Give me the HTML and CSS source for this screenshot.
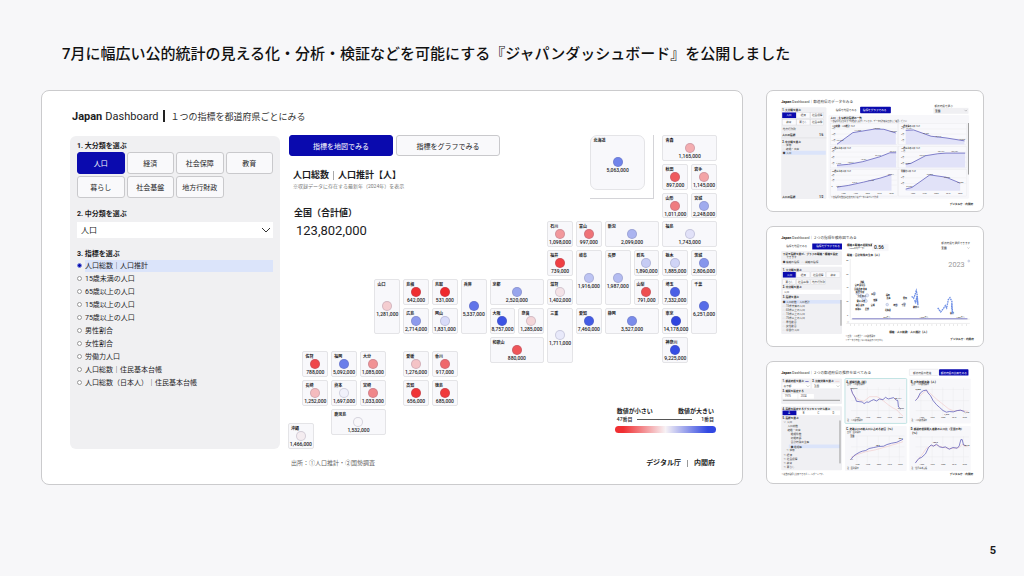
FILE: index.html
```html
<!DOCTYPE html>
<html lang="ja">
<head>
<meta charset="utf-8">
<title>ジャパンダッシュボード</title>
<link rel="stylesheet" href="styles.css">
</head>
<body>
<h1 class="title">7月に幅広い公的統計の見える化・分析・検証などを可能にする『ジャパンダッシュボード』を公開しました</h1>
<main class="slide">
  <section class="panel">
    <h2 class="brand"><b>Japan</b> <span>Dashboard</span><i class="brand-bar"></i><small>１つの指標を都道府県ごとにみる</small></h2>
    <div class="columns">
      <form class="sidebar">
        <h3>1. 大分類を選ぶ</h3>
        <div class="chips">
          <button type="button" class="on">人口</button><button type="button">経済</button><button type="button">社会保障</button><button type="button">教育</button>
          <button type="button">暮らし</button><button type="button">社会基盤</button><button type="button">地方行財政</button>
        </div>
        <h3><label for="mid">2. 中分類を選ぶ</label></h3>
        <div class="select-box">
          <select id="mid"><option>人口</option></select>
          <svg class="chevron" viewBox="0 0 10 6"><path d="M1 1l4 4 4-4"/></svg>
        </div>
        <h3>3. 指標を選ぶ</h3>
        <div class="options">
          <label><input type="radio" name="k" checked><span>人口総数｜人口推計</span></label>
          <label><input type="radio" name="k"><span>15歳未満の人口</span></label>
          <label><input type="radio" name="k"><span>65歳以上の人口</span></label>
          <label><input type="radio" name="k"><span>15歳以上の人口</span></label>
          <label><input type="radio" name="k"><span>75歳以上の人口</span></label>
          <label><input type="radio" name="k"><span>男性割合</span></label>
          <label><input type="radio" name="k"><span>女性割合</span></label>
          <label><input type="radio" name="k"><span>労働力人口</span></label>
          <label><input type="radio" name="k"><span>人口総数｜住民基本台帳</span></label>
          <label><input type="radio" name="k"><span>人口総数（日本人）｜住民基本台帳</span></label>
        </div>
      </form>
      <div class="map" id="map">
        <div class="intro">
          <div class="tabs"><button type="button" class="on">指標を地図でみる</button><button type="button">指標をグラフでみる</button></div>
          <h3>人口総数<i></i>人口推計【人】</h3>
          <p class="note">※収録データに存在する最新年（2024年）を表示</p>
          <p class="total-label">全国（合計値）</p>
          <p class="total">123,802,000</p>
        </div>
        <div class="inset"></div>
        <div class="legend">
          <p class="ends"><b>数値が小さい</b><b>数値が大きい</b></p>
          <p class="ranks"><span>47番目</span><i></i><span>1番目</span></p>
          <div class="ramp"></div>
        </div>
      </div>
    </div>
    <footer class="foot"><span>出所：①人口推計・②国勢調査</span><b>デジタル庁<i></i>内閣府</b></footer>
  </section>

  <aside class="thumbs">
    <svg class="thumb" viewBox="18 15 654 362">
      <text class="t-brand" x="61" y="50"><tspan class="b">Japan</tspan> Dashboard｜都道府県のデータをみる</text>
      <rect class="side" x="61" y="64" width="137" height="278" rx="4"/>
      <text class="b" x="64" y="76">1. 大分類を選ぶ</text>
      <g class="chip"><rect class="navy" x="64" y="80" width="42" height="17"/><rect x="108" y="80" width="40" height="17"/><rect x="150" y="80" width="39" height="17"/><rect x="64" y="101" width="42" height="17"/><rect x="108" y="101" width="40" height="17"/><rect x="150" y="101" width="39" height="17"/></g>
      <text class="w" x="76" y="92">人口</text><text x="120" y="92">経済</text><text x="154" y="92">社会保障</text><text x="76" y="113">教育</text><text x="116" y="113">暮らし</text><text x="154" y="113">社会基盤</text>
      <text x="66" y="132">地方行財政</text>
      <text class="b" x="64" y="152">人口の指標</text><text class="b" x="176" y="152">1/6</text>
      <path class="rule" d="M61 157h137"/>
      <text class="b" x="64" y="171">2. 中分類を選ぶ</text><text x="66" y="182">○ 世帯</text><text x="66" y="194">○ 結婚・出産</text>
      <rect class="pick" x="64" y="196" width="132" height="12"/><text x="66" y="206">● 人口</text>
      <text class="b" x="64" y="338">人口の指標</text><text class="b" x="176" y="338">1/2</text>
      <text x="226" y="76">指標を地図でみる</text><rect class="navy" x="300" y="63" width="93" height="19" rx="2"/><text class="w" x="308" y="76">指標をグラフでみる</text>
      <text x="525" y="62">都道府県を選ぶ</text><rect class="side" x="522" y="66" width="106" height="18"/><text class="b" x="527" y="79">全国</text><path class="arrow" d="M616 72l4 4 4-4"/>
      <rect class="soft" x="204" y="88" width="426" height="253" rx="4"/>
      <text class="b" x="210" y="101">人口｜主な統計指標の一覧</text>
      <text class="s" x="210" y="110">※各指標の最新年までの推移を表示しています。データの詳細は出典をご確認ください</text>
      <g class="plot"><rect x="211" y="113" width="203" height="65"/><rect x="417" y="113" width="206" height="65"/><rect x="211" y="183" width="203" height="65"/><rect x="417" y="183" width="206" height="65"/><rect x="211" y="253" width="203" height="80"/><rect x="417" y="253" width="206" height="80"/></g>
      <g class="s b"><text x="215" y="123">人口総数｜人口推計【人】</text><text x="424" y="123">15歳未満の人口【人】</text><text x="215" y="192">65歳以上の人口【人】</text><text x="424" y="192">15歳以上の人口【人】</text><text x="215" y="261">75歳以上の人口【人】</text><text x="424" y="261">労働力人口【人】</text></g>
      <path class="gridline" d="M226 130h185M226 145h185M226 160h185M436 130h185M436 145h185M436 160h185M226 200h185M226 215h185M226 230h185M436 200h185M436 215h185M436 230h185M226 270h185M226 285h185M226 300h185M436 278h185M436 295h185"/>
      <path class="area" d="M230 176L278 141 345 130 372 131 408 142V177H230ZM438 134L462 133 515 152 560 157 616 166V177H438ZM230 240L265 237 308 229 360 214 390 202 409 202V247H230ZM438 237L454 234 498 211 535 205 560 203 618 203V247H438ZM230 306L264 301 310 291 360 279 395 268V317H230ZM438 312L457 307 511 269 560 276 603 294V317H438Z"/>
      <path class="line" d="M230 176L278 141 345 130 372 131 408 142M438 134L462 133 515 152 560 157 616 166M230 240L265 237 308 229 360 214 390 202 409 202M438 237L454 234 498 211 535 205 560 203 618 203M230 306L264 301 310 291 360 279 395 268M438 312L457 307 511 269 560 276 603 294"/>
      <g class="s"><text x="228" y="166">104,665</text><text x="282" y="137">117,060</text><text x="340" y="129">128,057</text><text x="390" y="139">123,802</text><text x="440" y="130">27,221</text><text x="490" y="145">22,486</text><text x="527" y="154">18,472</text><text x="600" y="163">13,830</text><text x="228" y="237">7,393</text><text x="262" y="232">10,647</text><text x="302" y="223">18,261</text><text x="345" y="212">29,246</text><text x="390" y="200">36,243</text><text x="436" y="235">78,801</text><text x="480" y="212">90,342</text><text x="534" y="200">109,764</text><text x="575" y="200">109,754</text><text x="228" y="305">2,841</text><text x="276" y="295">5,973</text><text x="324" y="288">11,160</text><text x="384" y="270">20,777</text><text x="440" y="306">53,235</text><text x="502" y="269">66,000</text><text x="554" y="278">65,000</text><text x="595" y="293">61,000</text></g>
      <g class="s"><text x="243" y="327">1980</text><text x="280" y="327">1990</text><text x="316" y="327">2000</text><text x="352" y="327">2010</text><text x="388" y="327">2020</text><text x="453" y="327">1980</text><text x="488" y="327">1990</text><text x="524" y="327">2000</text><text x="560" y="327">2010</text><text x="596" y="327">2020</text></g>
      <g class="s"><text x="213" y="131">13万</text><text x="213" y="149">12万</text><text x="213" y="167">11万</text><text x="424" y="131">3万</text><text x="424" y="149">2万</text><text x="424" y="167">1万</text><text x="213" y="201">4万</text><text x="213" y="219">3万</text><text x="213" y="237">1万</text><text x="424" y="201">11万</text><text x="424" y="219">9万</text><text x="424" y="237">8万</text><text x="213" y="271">2万</text><text x="213" y="289">1万</text><text x="213" y="307">0</text><text x="424" y="279">6万</text><text x="424" y="297">5万</text></g>
      <text class="s" x="212" y="338">※各指標の数値は出典元の公表データに基づいて作成</text>
      <path class="scroll" d="M628 112V268"/><text class="b" x="571" y="359">デジタル庁｜内閣府</text>
    </svg>

    <svg class="thumb" viewBox="18 13 654 362">
      <text class="t-brand" x="61" y="48"><tspan class="b">Japan</tspan> Dashboard｜２つの指標を散布図でみる</text>
      <text x="76" y="75">指標を地図でみる</text><rect class="navy" x="155" y="63" width="90" height="18"/><text class="w" x="167" y="75">指標をグラフでみる</text>
      <rect class="side" x="61" y="86" width="184" height="42" rx="3"/><text class="b" x="66" y="98">下記で指標を選び、グラフの縦軸・横軸を設定</text><text x="76" y="108">できます</text><text x="66" y="121">● 横軸の指標　○ 縦軸の指標</text>
      <rect class="side" x="61" y="133" width="184" height="204" rx="3"/><text class="b" x="66" y="145">1. 大分類を選ぶ</text>
      <g class="chip"><rect class="navy" x="66" y="149" width="39" height="17"/><rect x="107" y="149" width="41" height="17"/><rect x="151" y="149" width="44" height="17"/><rect x="197" y="149" width="42" height="17"/><rect x="66" y="171" width="39" height="15"/><rect x="107" y="171" width="41" height="15"/><rect x="151" y="171" width="44" height="15"/></g>
      <text class="w" x="78" y="161">人口</text><text x="120" y="161">経済</text><text x="157" y="161">社会保障</text><text x="210" y="161">教育</text><text x="74" y="182">暮らし</text><text x="112" y="182">社会基盤</text><text x="154" y="182">地方行財政</text>
      <text class="b" x="66" y="199">2. 中分類を選ぶ</text><rect class="white" x="66" y="203" width="174" height="13"/><text x="69" y="213">人口</text>
      <text class="b" x="66" y="229">3. 指標を選ぶ</text><rect class="pick" x="66" y="234" width="176" height="11"/>
      <text x="66" y="243">● 人口総数｜人口推計</text><text x="66" y="255">○ 15歳未満の人口</text><text x="66" y="267">○ 65歳以上の人口</text><text x="66" y="279">○ 15歳以上の人口</text><text x="66" y="291">○ 75歳以上の人口</text><text x="66" y="303">○ 男性割合</text><text x="66" y="315">○ 女性割合</text><text x="66" y="327">○ 労働力人口</text><path class="scroll" d="M242 234V312"/>
      <text class="b" x="260" y="72">横軸と縦軸の相関係数</text><text class="s" x="262" y="81">（2023年のデータ）</text><rect class="soft" x="336" y="64" width="50" height="22"/><text class="num" x="342" y="80">0.56</text>
      <text x="546" y="65">都道府県を選択できます</text><text class="b" x="546" y="79">全国</text><path class="arrow" d="M625 75l3 3 3-3"/>
      <text class="b" x="260" y="100">縦軸｜合計特殊出生率【人】</text><text class="year" x="567" y="134">2023</text><circle class="node" cx="629" cy="116" r="3"/>
      <path class="rule" d="M270 110V288M270 292H632M258 305H632"/>
      <g class="s"><text x="258" y="116">80</text><text x="258" y="157">60</text><text x="258" y="198">40</text><text x="258" y="240">20</text><text x="260" y="281">0</text></g>
      <g class="node"><circle cx="292" cy="214" r="5"/><circle cx="303" cy="222" r="5"/><circle cx="311" cy="229" r="6"/><circle cx="321" cy="220" r="5"/><circle cx="317" cy="237" r="5"/><circle cx="299" cy="204" r="5"/><circle cx="343" cy="214" r="4"/><circle cx="346" cy="235" r="4"/><circle cx="382" cy="248" r="4"/><circle cx="410" cy="249" r="4"/><circle cx="434" cy="246" r="4"/></g>
      <g class="s b"><text x="300" y="183">沖縄</text><text x="284" y="192">宮崎 鹿児島</text><text x="282" y="203">島根 長崎 熊本</text><text x="287" y="213">佐賀 鳥取</text><text x="292" y="224">大分 石川</text><text x="290" y="241">富山 山形</text><text x="287" y="252">徳島 高知</text><text x="285" y="263">和歌山</text><text x="315" y="265">長野</text><text x="334" y="218">広島</text><text x="340" y="237">茨城</text><text x="332" y="253">宮城</text><text x="378" y="221">福岡</text><text x="380" y="231">兵庫</text><text x="400" y="253">埼玉</text><text x="425" y="253">千葉</text><text x="430" y="231">愛知</text><text x="375" y="268">北海道</text><text x="460" y="257">神奈川</text><text x="572" y="277">東京</text></g>
      <path class="trace" d="M456 223l6 6 4-10 4-13 3 14 2 30-3-28-4 22-3-9M535 258l9 12 9-11 5-8 4 7 5-25 5-6 6 12-1 16 3 20-2-30"/>
      <path class="line" d="M276 291H625"/><g class="s"><text x="370" y="290">500万人</text><text x="480" y="290">1,000万人</text><text x="590" y="290">1,500万人</text><text x="260" y="305">◎</text></g>
      <path class="ticks" d="M270 310H632"/><text class="b" x="388" y="333">横軸｜人口総数｜人口推計【人】</text>
      <text class="s" x="256" y="347">※出所：人口推計・人口動態調査</text><text class="s" x="256" y="358">※データが存在しない年は表示されません</text><text class="b" x="573" y="356">デジタル庁｜内閣府</text>
    </svg>

    <svg class="thumb" viewBox="18 13 654 366">
      <text class="t-brand" x="61" y="48"><tspan class="b">Japan</tspan> Dashboard｜２つの都道府県の推移を並べてみる</text>
      <rect class="chip" x="449" y="35" width="88" height="19" rx="2"/><text x="460" y="48">都道府県の推移</text><rect class="navy" x="539" y="35" width="89" height="19" rx="2"/><text class="w" x="544" y="48">都道府県の比較をみる</text>
      <rect class="side" x="61" y="63" width="184" height="77" rx="3"/><text class="b" x="65" y="75">1. 都道府県を選ぶ</text><path class="line" d="M134 72h10"/><text class="b" x="155" y="75">2. 比較対象を選ぶ</text><path class="red" d="M225 72h12"/>
      <rect class="white" x="65" y="78" width="84" height="15"/><rect class="white" x="155" y="78" width="84" height="15"/><text x="68" y="89">東京都</text><text x="160" y="89">全国</text><path class="arrow" d="M138 84l4 4 4-4M229 84l4 4 4-4"/>
      <text class="b" x="65" y="105">3. 期間を設定する</text><rect class="white" x="65" y="110" width="45" height="14"/><rect class="white" x="113" y="110" width="47" height="14"/><text x="72" y="120">1975</text><text x="120" y="120">2024</text><path class="scroll" d="M66 129H239"/>
      <rect class="side" x="61" y="147" width="184" height="194" rx="3"/><text class="b" x="65" y="157">4. 指標を設定するグラフを４つから選ぶ</text>
      <rect class="white" x="65" y="160" width="174" height="14"/><rect class="navy" x="65" y="160" width="42" height="14"/><text class="w" x="82" y="171">A</text><text x="126" y="171">B</text><text x="171" y="171">C</text><text x="216" y="171">D</text>
      <text class="b" x="65" y="186">5. 指標を選ぶ</text><text x="68" y="198">∨ 人口</text><text x="80" y="209">人口総数</text><text x="80" y="221">結婚・出産</text><text x="90" y="234">婚姻件数</text><text x="90" y="246">初婚年齢</text><text x="90" y="259">合計特殊出生率</text><rect class="pick" x="84" y="263" width="155" height="11"/><text x="90" y="272">● 婚姻率</text><text x="76" y="284">＞ 世帯</text><text x="68" y="297">＞ 経済</text><text x="68" y="310">＞ 社会保障</text><text x="68" y="322">＞ 教育</text><text x="68" y="335">＞ 暮らし</text><path class="scroll" d="M239 190V320"/>
      <rect class="soft teal" x="254" y="63" width="187" height="136" rx="3"/><rect class="soft" x="449" y="63" width="186" height="136" rx="3"/><rect class="soft" x="254" y="207" width="187" height="136" rx="3"/><rect class="soft" x="449" y="207" width="186" height="136" rx="3"/>
      <g class="b"><text x="258" y="76">A. 婚姻件数【組】</text><text x="453" y="76">B. 平均初婚年齢【人】</text><text x="258" y="220">C. 老齢人口の総人口に占める割合【％】</text><text x="453" y="220">D. 都道府県間転入者数の人口比（全国平均）</text><text x="453" y="230">【％】</text></g>
      <g class="s"><text x="260" y="84">出所：人口動態調査</text><text x="455" y="84">出所：人口動態調査</text><text x="260" y="229">出所：国勢調査</text></g>
      <path class="gridline" d="M272 96H434M272 130H434M272 160H434M290 90V178M322 90V178M355 90V178M388 90V178M419 90V178M468 96H630M468 130H630M468 160H630M484 90V178M518 90V178M550 90V178M582 90V178M613 90V178M272 237H434M272 270H434M272 300H434M290 237V318M322 237V318M355 237V318M388 237V318M419 237V318M468 240H630M468 270H630M468 300H630M484 237V318M518 237V318M550 237V318M582 237V318M613 237V318"/>
      <path class="red" d="M272 96l10 22 15 10 14 4 18-14h22l14 8 12 10 10 8 12 8 12 6 9 10 10 9M468 128l18-17 14-12 12 9 20 18 20 16 16 13 18 7 16-3 24 4M272 302l20-9 24-8 30-6 36-10 40-12 8-3M468 316l18-20 14-21 14-8 18-2 18 6 18 4 18-1 14-2 9-10 8 6 8 1"/>
      <path class="line" d="M272 93l5 15 7 11 5 13 8 1 9 1 6 5 8-5 6 1 8-5 7-3 9 4 8-6 11 2 8-7 8 5 8-2 8-2 8 7 5 2 2 19 7 6M467 130l7-7 8-16 9-7 10-2 4 8 8 9 8 15 10 12 10 9 10 9 10 5 9-2 12 1 12-4 10-1 12 4M272 308l9-11 9-6 9-5 8-3 10-2 10-6 14-3 14-3 16-1 10-5 14-4 16-3 8-4 11-5M467 319l11-14 8-3 12-11 9-19 8-8 7 4 9-6 10 8 9 2 8-2 12 7 11-5 13 2 6-7 5-19 4 0 4 16 6 2"/>
      <g class="s b"><text x="270" y="94">105,374</text><text x="406" y="125">87,111</text><text x="414" y="156">71,774</text><text x="468" y="97">2,250</text><text x="554" y="174">1,246</text><text x="615" y="167">1,443</text><text x="270" y="240">全国</text><text x="347" y="268">18.5</text><text x="417" y="247">22.7</text><text x="270" y="311">7.1</text><text x="520" y="258">103.2</text><text x="615" y="268">104.8</text></g>
      <g class="s"><text x="285" y="184">1980</text><text x="317" y="184">1990</text><text x="350" y="184">2000</text><text x="383" y="184">2010</text><text x="415" y="184">2020</text><text x="480" y="184">1980</text><text x="512" y="184">1990</text><text x="545" y="184">2000</text><text x="578" y="184">2010</text><text x="610" y="184">2020</text><text x="285" y="326">1980</text><text x="317" y="326">1990</text><text x="350" y="326">2000</text><text x="383" y="326">2010</text><text x="415" y="326">2020</text><text x="480" y="326">1980</text><text x="512" y="326">1990</text><text x="545" y="326">2000</text><text x="578" y="326">2010</text><text x="610" y="326">2020</text><text x="260" y="193">注：人口動態調査</text><text x="455" y="193">注：人口動態調査</text><text x="260" y="336">注：国勢調査</text><text x="455" y="336">注：住民基本台帳</text><text x="62" y="355">※複数の指標を比較できるダッシュボードです。</text></g>
      <text class="b" x="571" y="356">デジタル庁｜内閣府</text>
    </svg>
  </aside>
</main>
<footer class="page-no">5</footer>
<script src="map.js"></script>
</body>
</html>
```
FILE: styles.css
```css
* { box-sizing: border-box; }
body {
  margin: 0;
  min-height: 100vh;
  padding: 42px 40px 15px 41px;
  display: flex;
  flex-direction: column;
  background: #f7f7f9;
  color: #1c1c1e;
  font-family: Roboto, "Noto Sans CJK JP", sans-serif;
}
h1, h2, h3, p { margin: 0; }
button, select, input { font: inherit; color: inherit; margin: 0; }
.title {
  padding-left: 21px;
  margin-bottom: 24px;
  font: 500 15px/24px Roboto, "Noto Sans CJK JP", sans-serif;
  color: #111;
}
.slide {
  display: grid;
  grid-template-columns: 702fr 218fr;
  gap: 23px;
  align-items: start;
}
.panel {
  background: #fff;
  border: 1px solid #cbcbcd;
  border-radius: 8px;
  padding: 15px 25px 14px 28px;
}
.brand {
  display: flex;
  align-items: center;
  gap: 3px;
  height: 20px;
  margin: 0 0 9px 2px;
  font-size: 12px;
  font-weight: 400;
}
.brand b, .brand span { font-size: 11px; }
.brand-bar { width: 2px; height: 12px; margin: 0 2px; background: #222; }
.brand small { font-size: 9px; font-weight: 400; color: #333; }
.columns {
  display: grid;
  grid-template-columns: 210fr 432fr;
  column-gap: 8px;
  margin-right: -3px;
}
.sidebar {
  margin: 1px 0 3px;
  padding: 5px 7px;
  border-radius: 6px;
  background: #f0f0f2;
  font-size: 7px;
}
.sidebar h3 { font-size: 7px; line-height: 10px; font-weight: 700; }
.chips {
  display: grid;
  grid-template-columns: repeat(4, 1fr);
  gap: 2px;
  margin: 1px 0 11px;
}
.chips button, .tabs button {
  height: 22px;
  padding: 0;
  border: 1px solid #c9c9cc;
  border-radius: 3px;
  background: #f9f9fb;
  font-size: 7px;
  white-space: nowrap;
}
.chips .on, .tabs .on { background: #0a0aae; border-color: #0a0aae; color: #fff; }
.select-box { display: grid; margin: 3px 0 11px; background: #fff; align-items: center; }
.select-box > * { grid-area: 1 / 1; }
.select-box select {
  appearance: none;
  border: 0;
  height: 16px;
  padding: 0 4px;
  background: transparent;
  font-size: 8px;
}
.chevron { width: 10px; justify-self: end; margin-right: 2px; fill: none; stroke: #333; pointer-events: none; }
.options label { display: flex; align-items: center; height: 13px; gap: 3px; }
.options span { flex: 1; height: 12px; line-height: 12px; }
.options input {
  appearance: none;
  width: 5px;
  height: 5px;
  border: 1px solid #999;
  border-radius: 50%;
  background: #fff;
}
.options input:checked { background: #0a0aae; border-color: #7c8de0; }
.options input:checked + span { background: #dbe4fa; }
.map {
  display: grid;
  grid-template-columns: repeat(30, minmax(0, 1fr));
  grid-template-rows: repeat(22, minmax(0, 1fr));
  aspect-ratio: 432 / 317;
}
.intro { grid-area: 1 / 1 / 8 / 16; padding: 0 4px 0 2px; }
.tabs { display: grid; grid-template-columns: 1fr 1fr; gap: 3px; margin-left: -1px; }
.tabs button { height: 21px; }
.intro h3 { display: flex; align-items: center; margin: 13px 0 0 3px; font-size: 9px; line-height: 13px; }
.intro h3 i { width: 1px; height: 9px; margin: 0 4px; background: #aaa; }
.note { margin-left: 3px; font-size: 5px; line-height: 8px; color: #777; }
.total-label { margin: 16px 0 0 4px; font-size: 9px; line-height: 14px; font-weight: 700; }
.total { margin: 3px 0 0 6px; font-size: 13px; line-height: 16px; white-space: nowrap; }
.inset { grid-area: 1 / 22 / 6 / 27; margin: 0 8px 8px 0; border: solid #d4d4d8; border-width: 0 1px 1px 0; }
.tile {
  display: grid;
  grid-template-rows: 1fr 10px 1fr;
  justify-items: center;
  margin: 0 3px 3px 0;
  border: 1px solid #e4e4e7;
  border-radius: 2px;
  background: #f8f8fb;
  white-space: nowrap;
}
.tile.large { border-radius: 7px; }
.tile-name { justify-self: start; padding: 2px 0 0 2px; font-size: 4px; line-height: 5px; font-weight: 700; height: 0; }
.tile-dot { width: 10px; height: 10px; border-radius: 50%; border: 1px solid rgba(110, 110, 140, .25); }
.tile-value { font-size: 5px; line-height: 6px; height: 0; font-weight: 500; }
.legend { grid-area: 20 / 23 / 23 / 31; margin: -3px 4px 0 10px; }
.ends, .ranks { display: flex; justify-content: space-between; align-items: center; padding: 0 2px; line-height: 9px; }
.ends { font-size: 6px; }
.ranks { font-size: 5px; font-weight: 500; gap: 5px; padding-bottom: 2px; }
.ranks i { flex: 1; height: 1px; margin-right: 4px; background: #555; }
.ramp { height: 7px; border-radius: 4px; background: linear-gradient(90deg, #f02f32 8%, #f7f2f5 50%, #3148e2 92%); }
.foot { display: flex; justify-content: space-between; align-items: center; margin-top: 4px; padding: 0 2px 0 221px; font-size: 6px; line-height: 14px; color: #666; }
.foot b { display: flex; align-items: center; font-size: 7px; color: #222; }
.foot i { width: 1px; height: 7px; margin: 0 6px; background: #999; }
.thumbs { display: grid; gap: 14px; }
.thumb {
  display: block;
  width: 100%;
  background: #fff;
  border: 1px solid #cbcbcd;
  border-radius: 7px;
  font-size: 8px;
  fill: #444;
}
.thumb .t-brand { font-size: 11px; }
.thumb .b { font-weight: 700; fill: #222; }
.thumb .s { font-size: 6px; }
.thumb .w { fill: #fff; }
.thumb .side { fill: #f0f0f3; }
.thumb .soft { fill: #f7f7fa; }
.thumb .teal { stroke: #a5d8d8; stroke-width: 2; }
.thumb .white { fill: #fff; }
.thumb .pick { fill: #dbe4fa; }
.thumb .chip { fill: #fbfbfd; stroke: #d0d0d4; }
.thumb .navy { fill: #0a0aae; stroke: none; }
.thumb .plot { fill: #f9f9fc; stroke: #e4e4e8; }
.thumb .rule { fill: none; stroke: #c8c8cc; }
.thumb .gridline { fill: none; stroke: #e5e5ea; }
.thumb .area { fill: #e1e2f8; }
.thumb .line { fill: none; stroke: #4644b0; stroke-width: 2; }
.thumb .red { fill: none; stroke: #eda09c; stroke-width: 1; }
.thumb .trace { fill: none; stroke: #6d8ee6; stroke-width: 4; stroke-dasharray: 5 2; }
.thumb .node { fill: #dfe6f8; stroke: #8997bd; }
.thumb .arrow { fill: none; stroke: #666; }
.thumb .scroll { stroke: #999; stroke-width: 3; }
.thumb .ticks { stroke: #bbb; stroke-width: 6; stroke-dasharray: 1 12; }
.thumb .year { font-size: 22px; fill: #999; }
.thumb .num { font-size: 15px; font-weight: 500; fill: #222; }
.page-no { margin-top: auto; align-self: flex-end; margin-right: -12px; font-size: 11px; line-height: 20px; font-weight: 700; }
```
FILE: map.js
```js
// [name, value, column, row, column span, row span, dot colour]
const prefectures = [
  ["北海道", "5,063,000", 21, 0, 4, 4, "#7084eb"],
  ["青森", "1,165,000", 26, 0, 4, 2, "#f4adb0"],
  ["秋田", "897,000", 26, 2, 2, 2, "#ef5a5e"],
  ["岩手", "1,145,000", 28, 2, 2, 2, "#f3a4a7"],
  ["山形", "1,011,000", 26, 4, 2, 2, "#ef7c80"],
  ["宮城", "2,248,000", 28, 4, 2, 2, "#a0abee"],
  ["石川", "1,098,000", 18, 6, 2, 2, "#f2989c"],
  ["富山", "997,000", 20, 6, 2, 2, "#ef7377"],
  ["新潟", "2,099,000", 22, 6, 4, 2, "#abb4f0"],
  ["福島", "1,743,000", 26, 6, 4, 2, "#e1e1f8"],
  ["福井", "739,000", 18, 8, 2, 2, "#f03f42"],
  ["岐阜", "1,916,000", 20, 8, 2, 4, "#bdc4f3"],
  ["長野", "1,987,000", 22, 8, 2, 4, "#b4bcf1"],
  ["群馬", "1,890,000", 24, 8, 2, 2, "#c6ccf4"],
  ["栃木", "1,885,000", 26, 8, 2, 2, "#d0d4f6"],
  ["茨城", "2,806,000", 28, 8, 2, 2, "#8695ec"],
  ["山口", "1,281,000", 6, 10, 2, 4, "#f4cdd0"],
  ["島根", "642,000", 8, 10, 2, 2, "#ef2e30"],
  ["鳥取", "531,000", 10, 10, 2, 2, "#ef292b"],
  ["兵庫", "5,337,000", 12, 10, 2, 4, "#6175e9"],
  ["京都", "2,520,000", 14, 10, 4, 2, "#98a5ed"],
  ["滋賀", "1,402,000", 18, 10, 2, 2, "#f4e3e7"],
  ["山梨", "791,000", 24, 10, 2, 2, "#ee4f50"],
  ["埼玉", "7,332,000", 26, 10, 2, 2, "#4a60e6"],
  ["千葉", "6,251,000", 28, 10, 2, 4, "#566ce8"],
  ["広島", "2,714,000", 8, 12, 2, 2, "#8d9bed"],
  ["岡山", "1,831,000", 10, 12, 2, 2, "#d8dbf8"],
  ["大阪", "8,757,000", 14, 12, 2, 2, "#3c53e4"],
  ["奈良", "1,285,000", 16, 12, 2, 2, "#f4d6d9"],
  ["三重", "1,711,000", 18, 12, 2, 4, "#e8e9fa"],
  ["愛知", "7,460,000", 20, 12, 2, 2, "#435be5"],
  ["静岡", "3,527,000", 22, 12, 4, 2, "#7a8ceb"],
  ["東京", "14,178,000", 26, 12, 2, 2, "#2f45df"],
  ["和歌山", "880,000", 14, 14, 4, 2, "#ef5559"],
  ["神奈川", "9,225,000", 26, 14, 2, 2, "#354de4"],
  ["佐賀", "788,000", 1, 15, 2, 2, "#ef474a"],
  ["福岡", "5,092,000", 3, 15, 2, 2, "#6a7eea"],
  ["大分", "1,085,000", 5, 15, 2, 2, "#f19295"],
  ["愛媛", "1,276,000", 8, 15, 2, 2, "#f4c3c6"],
  ["香川", "917,000", 10, 15, 2, 2, "#ef686c"],
  ["長崎", "1,252,000", 1, 17, 2, 2, "#f4bbbe"],
  ["熊本", "1,697,000", 3, 17, 2, 2, "#f1f1fb"],
  ["宮崎", "1,033,000", 5, 17, 2, 2, "#f0868a"],
  ["高知", "656,000", 8, 17, 2, 2, "#f03436"],
  ["徳島", "685,000", 10, 17, 2, 2, "#f0393b"],
  ["鹿児島", "1,532,000", 3, 19, 4, 2, "#f8f7fa"],
  ["沖縄", "1,466,000", 0, 20, 2, 2, "#f4ecf0"]
];

const map = document.getElementById("map");
for (const [name, value, col, row, w, h, colour] of prefectures) {
  const tile = document.createElement("div");
  tile.className = w === 4 && h === 4 ? "tile large" : "tile";
  tile.style.gridArea = `${row + 1} / ${col + 1} / span ${h} / span ${w}`;
  tile.innerHTML = `<span class="tile-name">${name}</span><span class="tile-dot" style="background:${colour}"></span><span class="tile-value">${value}</span>`;
  map.append(tile);
}
```
